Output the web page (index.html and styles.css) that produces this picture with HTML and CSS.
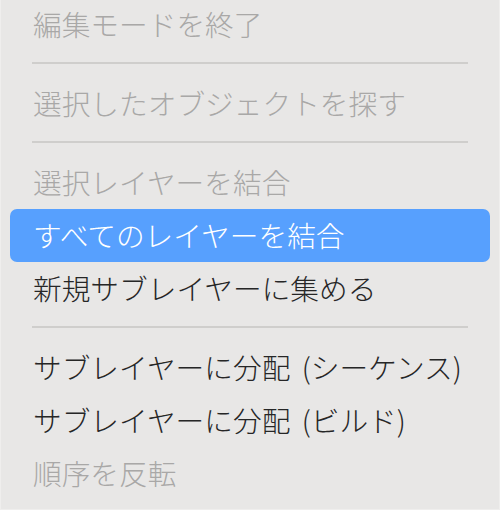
FILE: index.html
```html
<!DOCTYPE html>
<html lang="ja">
<head>
    <meta charset="UTF-8">
    <meta name="viewport" content="width=device-width, initial-scale=1.0">
    <title>レイヤーメニュー</title>
    <link rel="stylesheet" href="styles.css">
</head>
<body>
    <div class="menu">
        <ul class="menu-list">
            <li class="menu-item disabled">編集モードを終了</li>
            <li class="separator"></li>
            <li class="menu-item disabled">選択したオブジェクトを探す</li>
            <li class="separator"></li>
            <li class="menu-item disabled">選択レイヤーを結合</li>
            <li class="menu-item selected">すべてのレイヤーを結合</li>
            <li class="menu-item">新規サブレイヤーに集める</li>
            <li class="separator"></li>
            <li class="menu-item">サブレイヤーに分配 (シーケンス)</li>
            <li class="menu-item">サブレイヤーに分配 (ビルド)</li>
            <li class="menu-item disabled">順序を反転</li>
        </ul>
    </div>
</body>
</html>
```

FILE: styles.css
```css
:root {
    --menu-bg: #e8e7e6;
    --text: #262626;
    --text-disabled: #a9a8a7;
    --highlight: #57a0fe;
    --rule: #cfcecc;
}

* {
    margin: 0;
    padding: 0;
    box-sizing: border-box;
}

html, body {
    width: 500px;
    height: 510px;
    overflow: hidden;
}

body {
    font-family: "Noto Sans CJK JP", "Noto Sans", sans-serif;
    background-color: var(--menu-bg);
    color: var(--text);
}

.menu {
    width: 500px;
    height: 512px;
    margin-top: -2px;
    padding: 0 9px;
    border: 1px solid #efeeed;
    border-top: none;
    background-color: var(--menu-bg);
}

.menu-list {
    list-style: none;
}

.menu-item {
    display: flex;
    align-items: center;
    height: 53px;
    padding-left: 23px;
    font-size: 28.7px;
    font-weight: 300;
    line-height: 1;
    word-spacing: 5px;
    white-space: nowrap;
    border-radius: 7px;
}

.menu-item.disabled {
    color: var(--text-disabled);
}

.menu-item.selected {
    background-color: var(--highlight);
    color: #fff;
}

.separator {
    height: 26px;
    padding: 11px 22px 13px 22px;
}

.separator::after {
    content: "";
    display: block;
    height: 2px;
    background-color: var(--rule);
}
```
